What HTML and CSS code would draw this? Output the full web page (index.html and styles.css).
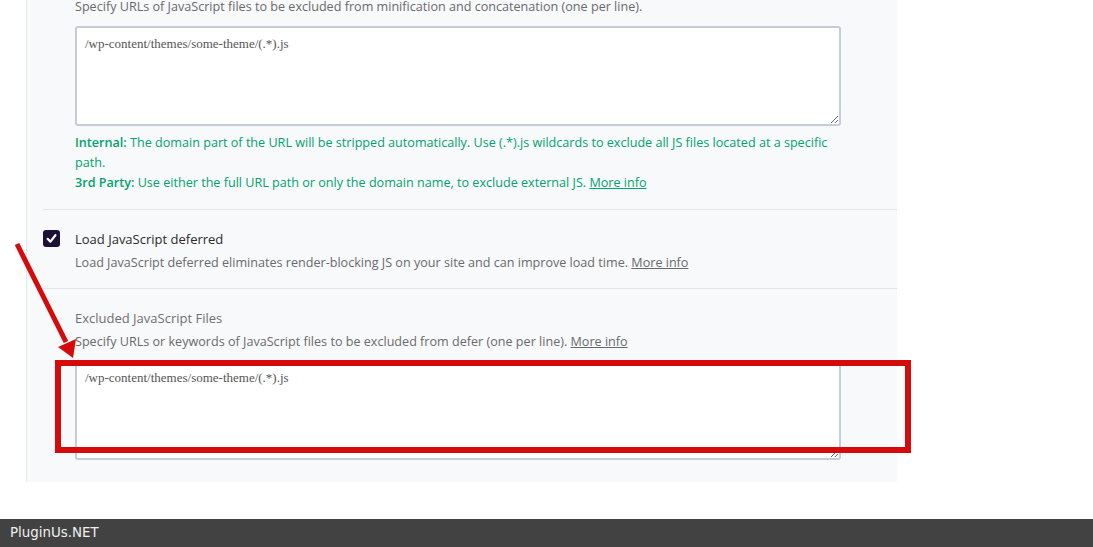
FILE: index.html
```html
<!DOCTYPE html>
<html>
<head>
<meta charset="utf-8">
<link rel="stylesheet" href="styles.css">
</head>
<body>
<div class="page">
  <div class="panel">
    <div class="row first">
      <p class="desc">Specify URLs of JavaScript files to be excluded from minification and concatenation (one per line).</p>
      <textarea class="field" readonly>/wp-content/themes/some-theme/(.*).js</textarea>
      <div class="notes">
        <p><b>Internal:</b> The domain part of the URL will be stripped automatically. Use (.*).js wildcards to exclude all JS files located at a specific path.</p>
        <p><b>3rd Party:</b> Use either the full URL path or only the domain name, to exclude external JS. <a href="#">More info</a></p>
      </div>
    </div>
    <div class="row check-row">
      <span class="checkbox"><svg viewBox="0 0 17 17" width="17" height="17"><path d="M4.6 8.8 L7.4 11.6 L12.4 5.2" fill="none" stroke="#fff" stroke-width="2.2" stroke-linecap="round" stroke-linejoin="round"/></svg></span>
      <div class="check-body">
        <p class="title">Load JavaScript deferred</p>
        <p class="desc">Load JavaScript deferred eliminates render-blocking JS on your site and can improve load time. <a href="#">More info</a></p>
      </div>
    </div>
    <div class="row last">
      <p class="label">Excluded JavaScript Files</p>
      <p class="desc">Specify URLs or keywords of JavaScript files to be excluded from defer (one per line). <a href="#">More info</a></p>
      <textarea class="field" readonly>/wp-content/themes/some-theme/(.*).js</textarea>
    </div>
  </div>
</div>
<div class="highlight"></div>
<svg class="arrow" width="90" height="130" viewBox="0 0 90 130">
  <line x1="17" y1="14" x2="66" y2="112" stroke="#d50b0b" stroke-width="5"/>
  <polygon points="58,117 76,109 73,128" fill="#d50b0b"/>
</svg>
<footer class="footer">PluginUs.NET</footer>
</body>
</html>
```
FILE: styles.css
```css
html, body {
  margin: 0;
  padding: 0;
  background: #ffffff;
  height: 547px;
  overflow: hidden;
}
body {
  position: relative;
  font-family: "Open Sans", "Noto Sans", sans-serif;
  font-size: 12.6px;
  line-height: 20px;
  color: #6a6a6a;
}
p { margin: 0; }
a { color: inherit; text-decoration: underline; }

.page {
  display: flow-root;
  height: 519px;
  padding-left: 26px;
  box-sizing: border-box;
}
.panel {
  width: 871px;
  height: 485px;
  margin-top: -3px;
  border-left: 1px solid #e8e9ec;
  background: #f8f9fb;
  box-sizing: border-box;
  padding-left: 16px;
}
.row {
  border-bottom: 1px solid #e3e5e8;
  padding-left: 32px;
}
.row.first {
  padding-bottom: 16px;
}
.row.last {
  border-bottom: none;
  padding-top: 19px;
}
.field {
  display: block;
  width: 766px;
  height: 100px;
  box-sizing: border-box;
  margin: 9px 0 0 0;
  padding: 7px 8px;
  border: 2px solid #c6ccd6;
  border-radius: 3px;
  background: #ffffff;
  font-family: "Liberation Serif", serif;
  font-size: 13px;
  line-height: 18px;
  color: #555555;
  resize: vertical;
  outline: none;
}
.row.last .field { margin-top: 8px; }
.notes {
  margin-top: 7px;
  color: #00a36d;
  width: 766px;
}
.notes b { font-weight: 600; }
.check-row {
  display: flex;
  align-items: flex-start;
  gap: 15px;
  padding: 19px 0 15px 0;
}
.checkbox {
  flex: none;
  width: 17px;
  height: 17px;
  margin-top: 1px;
  background: #1e1136;
  border-radius: 3px;
  display: flex;
}
.title {
  font-size: 13px;
  color: #2a2a2a;
  margin-bottom: 4px;
}
.label {
  font-size: 13px;
  color: #6f6f6f;
  margin-bottom: 4px;
}

.highlight {
  position: absolute;
  left: 55px;
  top: 360px;
  width: 856px;
  height: 93px;
  box-sizing: border-box;
  border: 6px solid #d50b0b;
}
.arrow {
  position: absolute;
  left: 0;
  top: 230px;
}
.footer {
  height: 28px;
  background: #424242;
  color: #f0f0f0;
  font-family: "DejaVu Sans", sans-serif;
  font-size: 13.4px;
  line-height: 28px;
  padding-left: 10px;
}
```
